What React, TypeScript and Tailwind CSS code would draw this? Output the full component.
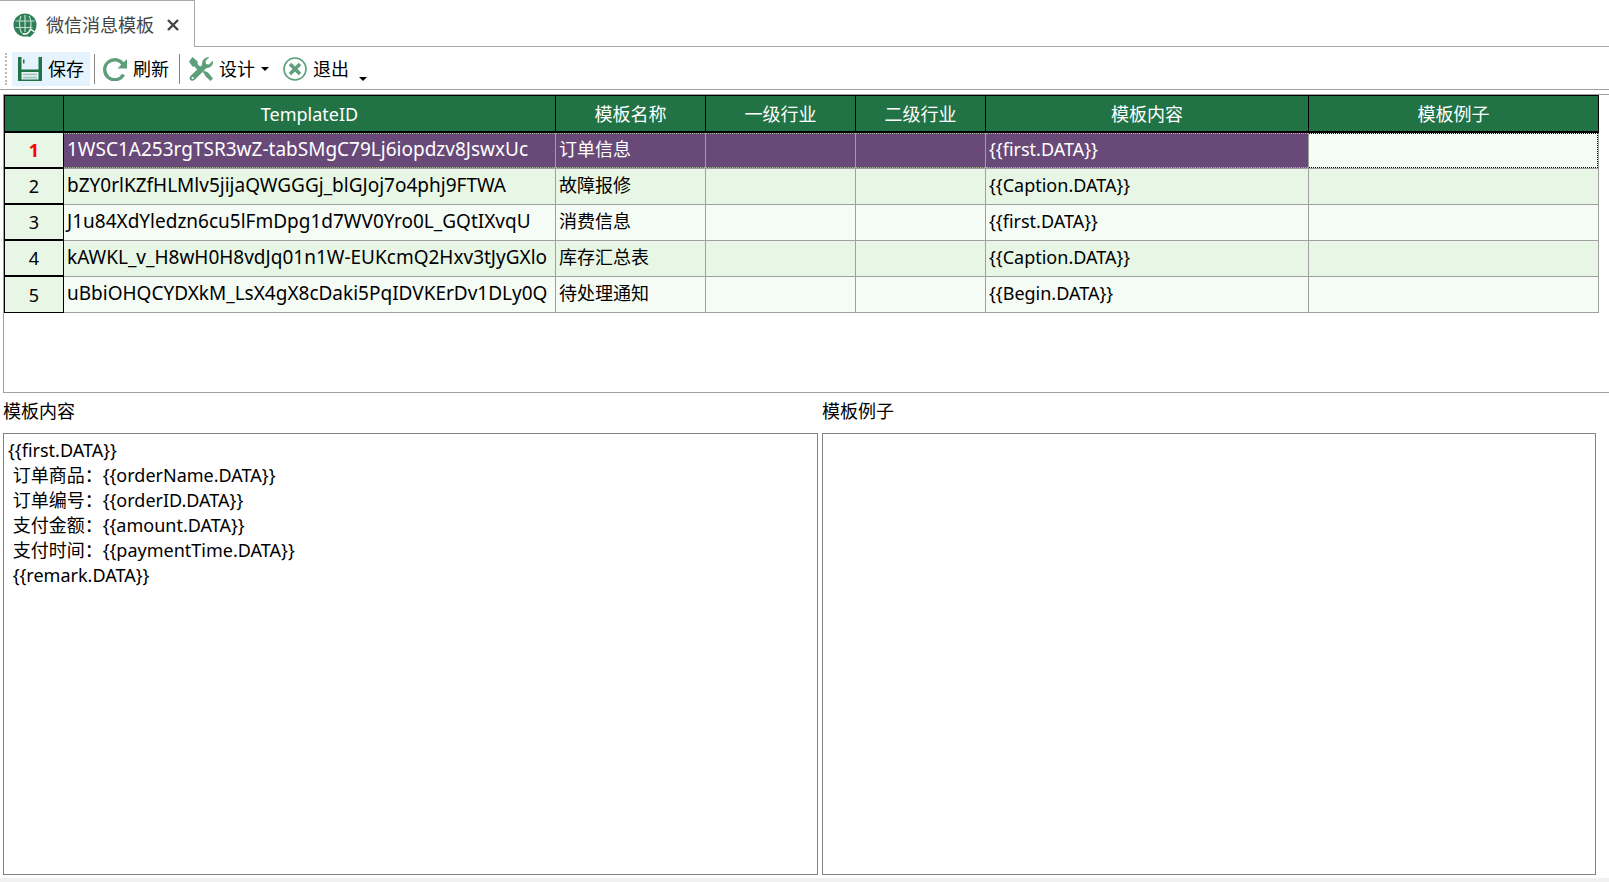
import clsx from 'clsx';

const columns = [
    { name: 'TemplateID', width: 'w-[492px]' },
    { name: '模板名称', width: 'w-[150px]' },
    { name: '一级行业', width: 'w-[150px]' },
    { name: '二级行业', width: 'w-[130px]' },
    { name: '模板内容', width: 'w-[323px]' },
    { name: '模板例子', width: '' },
];

const rows = [
    ['1WSC1A253rgTSR3wZ-tabSMgC79Lj6iopdzv8JswxUc', '订单信息', '', '', '{{first.DATA}}', ''],
    ['bZY0rlKZfHLMlv5jijaQWGGGj_blGJoj7o4phj9FTWA', '故障报修', '', '', '{{Caption.DATA}}', ''],
    ['J1u84XdYledzn6cu5lFmDpg1d7WV0Yro0L_GQtIXvqU', '消费信息', '', '', '{{first.DATA}}', ''],
    ['kAWKL_v_H8wH0H8vdJq01n1W-EUKcmQ2Hxv3tJyGXlo', '库存汇总表', '', '', '{{Caption.DATA}}', ''],
    ['uBbiOHQCYDXkM_LsX4gX8cDaki5PqIDVKErDv1DLy0Q', '待处理通知', '', '', '{{Begin.DATA}}', ''],
];

const content = `{{first.DATA}}
 订单商品：{{orderName.DATA}}
 订单编号：{{orderID.DATA}}
 支付金额：{{amount.DATA}}
 支付时间：{{paymentTime.DATA}}
 {{remark.DATA}}`;

const GlobeIcon = () => (
    <svg className="size-6" viewBox="0 0 24 24" fill="none">
        <circle cx="12" cy="12" r="11.5" fill="#2f7f57" />
        <g stroke="#c4dfd0" strokeWidth="1.2">
            <path d="M12 2v17M2.500 8h19M2.500 14.500h17" />
            <path d="M8 3C6 7 6 15 8.500 20M16 3C18 6 18.500 10 17.500 15" />
        </g>
        {/* pointer over the lower right */}
        <path d="M12 19.500c2.500.500 4-1 5.500-3.500l4.500 3-5 5-5-1.500z" fill="#2f7f57" />
        <path d="M9.500 20.500c4 1.500 6.500-.500 8-4.500l4 3" stroke="#fff" strokeWidth="1.400" />
    </svg>
);

const SaveIcon = () => (
    <svg className="size-6" viewBox="0 0 24 24" fill="#217346">
        <path d="M0 0h3.500v12.500h17V0H24v24H0z" />
        <path d="M5 2.500h1.500v4H5z" />
        <path d="M3.500 15h17v7.500h-17z" fill="#e5f3ff" />
        <path d="M5 16.500h14v1.800H5zM5 19.700h14v1.800H5z" fill="#a5c8b5" />
    </svg>
);

const RefreshIcon = () => (
    <svg className="size-6" viewBox="0 0 24 24" fill="none">
        <path d="M20.500 8A10 10 0 1 0 20.500 17.500" stroke="#5d9f7b" strokeWidth="3.400" />
        <path d="M24 2v9.500h-9.500z" fill="#5d9f7b" />
    </svg>
);

const ToolsIcon = () => (
    <svg className="size-6" viewBox="0 0 24 24" fill="#5d9f7b">
        {/* wrench */}
        <path d="M20.500 0l-4 4 .500 3 3 .500 4-4c.500 4-2 7.500-6.500 7.500L6 22.500c-1.300 1.500-3 1.700-4.300.800-1.500-1.200-1.500-3 0-4.500L13 8c-.500-4.500 3-8 7.500-8z" />
        <circle cx="3.700" cy="21" r="1.100" fill="#fff" />
        {/* screwdriver */}
        <path d="M3.500 0l5.200 4.600-.200 2.400 3 3-3 3-3-3.400-2 .2L0 4.500z" />
        <path d="M15 13.800l2.500 1c1.500.500 2 1 3 2.500L24 21.500 21.500 24l-4-3.700c-1-1-1.500-1.500-2-3l-1.800-2z" />
    </svg>
);

const ExitIcon = () => (
    <svg className="size-6" viewBox="0 0 24 24" fill="none" stroke="#5d9f7b">
        <circle cx="12" cy="12" r="11" strokeWidth="1.600" />
        <path d="M7 7l10 10M17 7L7 17" strokeWidth="3.600" />
    </svg>
);

const Caret = () => (
    <svg className="h-1 w-2" viewBox="0 0 8 4">
        <path d="M0 0h8L4 4z" />
    </svg>
);

const Separator = () => <div className="h-[30px] w-px bg-[#858585]" />;

const TabBar = () => (
    <div className="flex h-[47px]">
        <div className="flex w-[195px] items-center border-t border-r border-[#a8a8a8] pt-[2px] pl-[13px] text-[#444]">
            <button className="flex items-center gap-[9px]">
                <GlobeIcon />
                微信消息模板
            </button>
            <button className="ml-3 p-px" aria-label="关闭">
                <svg className="size-3" viewBox="0 0 12 12" stroke="#444" strokeWidth="2.400">
                    <path d="M1 1l10 10M11 1L1 11" />
                </svg>
            </button>
        </div>
        <div className="flex-1 border-b border-[#a8a8a8]" />
    </div>
);

const Toolbar = () => (
    <div className="flex h-[43px] items-center border-b border-[#a0a0a0] pt-[2px] pl-[5px]">
        <div className="h-8 border-l-2 border-dotted border-[#bbb]" />
        <button className="ml-[5px] flex h-[34px] items-center gap-[6px] bg-[#e5f3ff] px-[6px]">
            <SaveIcon />
            保存
        </button>
        <div className="ml-1"><Separator /></div>
        <button className="ml-2 flex items-center gap-[6px]">
            <RefreshIcon />
            刷新
        </button>
        <div className="ml-[10px]"><Separator /></div>
        <button className="ml-[9px] flex items-center gap-[6px]">
            <ToolsIcon />
            设计
            <Caret />
        </button>
        <button className="ml-[14px] flex items-center gap-[6px]">
            <ExitIcon />
            退出
        </button>
        <button className="ml-[10px] self-end pb-2" aria-label="更多">
            <Caret />
        </button>
    </div>
);

const TemplateGrid = () => (
    <div className="mt-1 ml-[3px] h-[299px] border-y border-l border-[#a0a0a0] pr-[10px]">
        <table className="w-full table-fixed border-separate border-spacing-0 border-t border-l border-black">
            <thead>
                <tr className="h-[37px] bg-[#217346] text-white">
                    <th className="w-[59px] border-r border-b-2 border-black p-0" />
                    {columns.map((col) => (
                        <th key={col.name} className={clsx('border-r border-b-2 border-black p-0 font-normal', col.width)}>
                            {col.name}
                        </th>
                    ))}
                </tr>
            </thead>
            <tbody>
                {rows.map((row, i) => (
                    <tr key={row[0]} className={i % 2 ? 'bg-[#e7f6e5]' : 'bg-[#f5fcf5]'}>
                        <th
                            className={clsx(
                                'border-r border-black bg-[#e7f6e5] p-0',
                                i === rows.length - 1 ? 'border-b' : 'border-b-2',
                                i === 0 ? 'font-bold text-[#ff0000]' : 'font-normal'
                            )}
                        >
                            {i + 1}
                        </th>
                        {row.map((cell, j) => (
                            <td
                                key={j}
                                className={clsx('border-r border-b border-[#a0a0a0] p-0', i === 0 && j < 5 && 'bg-[#684978] text-white')}
                            >
                                <div
                                    className={clsx(
                                        'flex h-[35px] items-center px-[3px] pb-[3px]',
                                        j === 0 && 'text-[19px]',
                                        i === 0 && 'border-y border-dotted',
                                        i === 0 && (j < 5 ? 'border-[#a9b79a]' : 'border-r border-black')
                                    )}
                                >
                                    {cell}
                                </div>
                            </td>
                        ))}
                    </tr>
                ))}
            </tbody>
        </table>
    </div>
);

const App = () => {
    return (
        <div className="flex h-screen flex-col bg-white font-['Noto_Sans','Noto_Sans_CJK_SC',sans-serif] text-[18px] leading-[26px] text-black">
            <TabBar />
            <Toolbar />
            <TemplateGrid />

            {/* Detail editors */}
            <div className="flex flex-1 gap-1 pt-[5px] pr-[13px] pb-[3px] pl-[3px]">
                <div className="flex w-[815px] flex-col">
                    <label htmlFor="content">模板内容</label>
                    <textarea
                        id="content"
                        className="mt-[9px] flex-1 resize-none border border-[#828282] p-1 leading-[25px] outline-none"
                        defaultValue={content}
                    />
                </div>
                <div className="flex flex-1 flex-col">
                    <label htmlFor="example">模板例子</label>
                    <textarea
                        id="example"
                        className="mt-[9px] flex-1 resize-none border border-[#828282] p-1 leading-[25px] outline-none"
                    />
                </div>
            </div>
            <div className="h-1 bg-[#f0f0f0]" />
        </div>
    );
};

export default App;
